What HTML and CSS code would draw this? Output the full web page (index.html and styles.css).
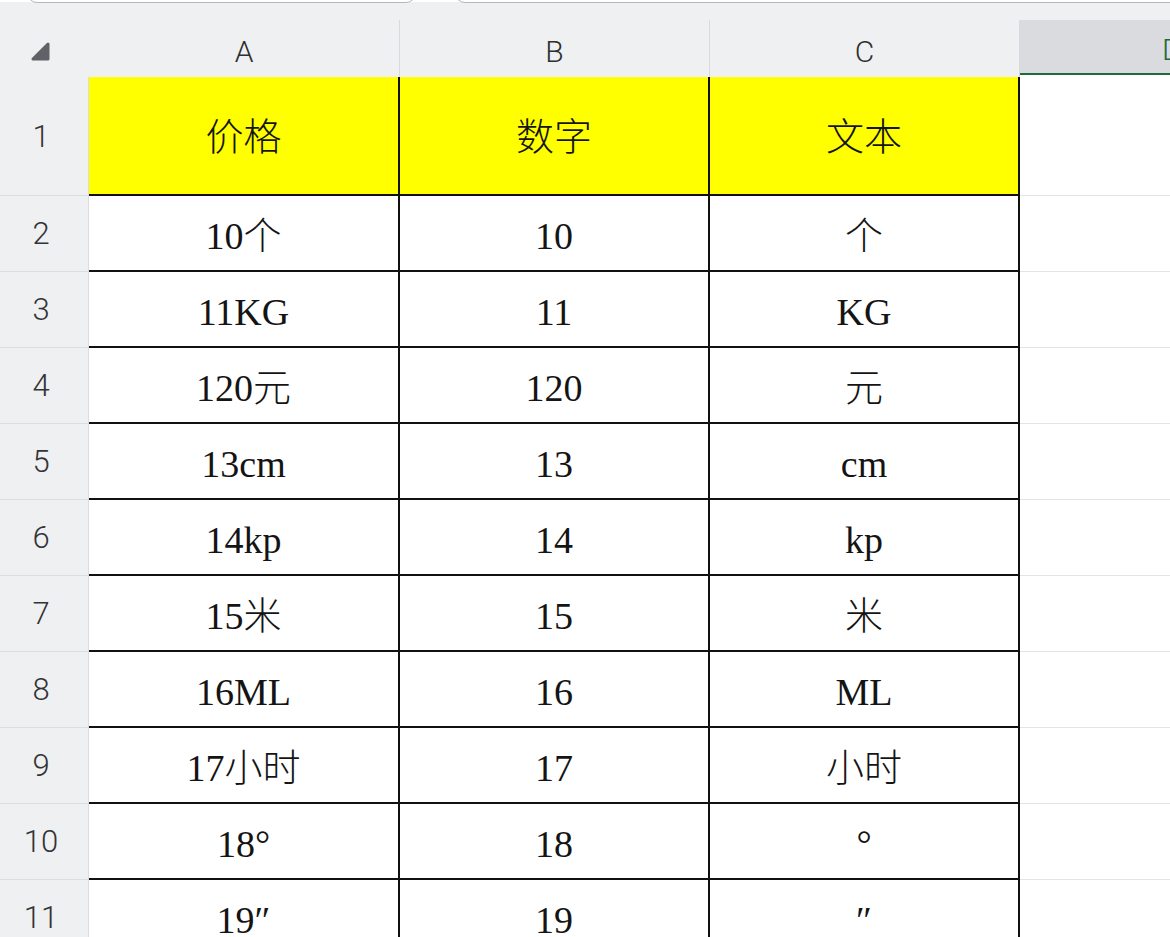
FILE: index.html
```html
<!DOCTYPE html>
<html lang="zh-CN">
<head>
<meta charset="utf-8">
<title>Sheet</title>
<link rel="stylesheet" href="styles.css">
</head>
<body>
<div class="toolbar">
  <div class="box box-name"></div>
  <div class="box box-formula"></div>
</div>
<div class="sheet">
  <div class="corner">
    <svg width="20" height="20" viewBox="0 0 20 20"><polygon points="17,2 17,17 2,17" fill="#5f6266" stroke="#5f6266" stroke-width="3" stroke-linejoin="round"/></svg>
  </div>
  <div class="colhead sep">A</div>
  <div class="colhead sep">B</div>
  <div class="colhead sep">C</div>
  <div class="colhead selected"><span class="dletter">D</span></div>

  <div class="rowhead">1</div>
  <div class="cell yellow">价格</div>
  <div class="cell yellow">数字</div>
  <div class="cell yellow">文本</div>
  <div class="blank"></div>

  <div class="rowhead">2</div>
  <div class="cell">10个</div>
  <div class="cell">10</div>
  <div class="cell">个</div>
  <div class="blank"></div>

  <div class="rowhead">3</div>
  <div class="cell">11KG</div>
  <div class="cell">11</div>
  <div class="cell">KG</div>
  <div class="blank"></div>

  <div class="rowhead">4</div>
  <div class="cell">120元</div>
  <div class="cell">120</div>
  <div class="cell">元</div>
  <div class="blank"></div>

  <div class="rowhead">5</div>
  <div class="cell">13cm</div>
  <div class="cell">13</div>
  <div class="cell">cm</div>
  <div class="blank"></div>

  <div class="rowhead">6</div>
  <div class="cell">14kp</div>
  <div class="cell">14</div>
  <div class="cell">kp</div>
  <div class="blank"></div>

  <div class="rowhead">7</div>
  <div class="cell">15米</div>
  <div class="cell">15</div>
  <div class="cell">米</div>
  <div class="blank"></div>

  <div class="rowhead">8</div>
  <div class="cell">16ML</div>
  <div class="cell">16</div>
  <div class="cell">ML</div>
  <div class="blank"></div>

  <div class="rowhead">9</div>
  <div class="cell">17小时</div>
  <div class="cell">17</div>
  <div class="cell">小时</div>
  <div class="blank"></div>

  <div class="rowhead">10</div>
  <div class="cell">18°</div>
  <div class="cell">18</div>
  <div class="cell">°</div>
  <div class="blank"></div>

  <div class="rowhead">11</div>
  <div class="cell">19″</div>
  <div class="cell">19</div>
  <div class="cell">″</div>
  <div class="blank"></div>
</div>
</body>
</html>
```

FILE: styles.css
```css
html, body {
  margin: 0;
  padding: 0;
  background: #ffffff;
  overflow: hidden;
  width: 1170px;
  height: 937px;
}

.toolbar {
  height: 20px;
  display: flex;
  align-items: flex-end;
  overflow: hidden;
  background: linear-gradient(#ffffff 0 2px, #eff0f2 2px);
}

.box {
  height: 24px;
  margin-top: -21px;
  align-self: flex-start;
  box-sizing: border-box;
  border: 1.5px solid #b4b7bb;
  border-radius: 10px;
  background: #ffffff;
  flex: none;
}

.box-name {
  margin-left: 27px;
  width: 389px;
}

.box-formula {
  margin-left: 39px;
  width: 760px;
}

.sheet {
  display: grid;
  grid-template-columns: 89px 311px 310px 310px 1fr;
  grid-template-rows: 57px 119px repeat(10, 76px);
}

.corner {
  background: #eff0f2;
  display: flex;
  align-items: center;
  justify-content: center;
  padding: 6px 8px 0 0;
}

.colhead {
  background: #eff0f2;
  display: flex;
  align-items: center;
  justify-content: center;
  padding-top: 6px;
  box-sizing: border-box;
  font-family: Roboto, "Liberation Sans", sans-serif;
  font-size: 30px;
  font-weight: 300;
  color: #2e2f30;
}

.colhead.sep {
  border-right: 1px solid #d8dadd;
}

.colhead.selected {
  background: #dadbde;
  justify-content: flex-start;
  margin-bottom: 2px;
  border-bottom: 2px solid #1d6a3a;
  overflow: hidden;
}

.dletter {
  color: #1d6a3a;
  margin-left: 142px;
}

.rowhead {
  background: #eff0f2;
  border-bottom: 1px solid #dcdde0;
  border-right: 1px solid #dcdde0;
  box-sizing: border-box;
  display: flex;
  align-items: center;
  justify-content: center;
  padding-right: 6px;
  font-family: Roboto, "Liberation Sans", sans-serif;
  font-size: 31px;
  font-weight: 300;
  color: #333435;
}

.cell {
  box-sizing: border-box;
  border-right: 2px solid #111111;
  border-bottom: 2px solid #111111;
  background: #ffffff;
  display: flex;
  align-items: center;
  justify-content: center;
  padding-top: 6px;
  font-family: "Liberation Serif", "Noto Sans CJK SC", serif;
  font-size: 38px;
  font-weight: 300;
  line-height: 1;
  color: #141414;
}

.cell.yellow {
  background: #ffff00;
  padding-top: 2px;
}

.blank {
  background: #ffffff;
  border-bottom: 1px solid #e3e4e6;
  box-sizing: border-box;
}
```
